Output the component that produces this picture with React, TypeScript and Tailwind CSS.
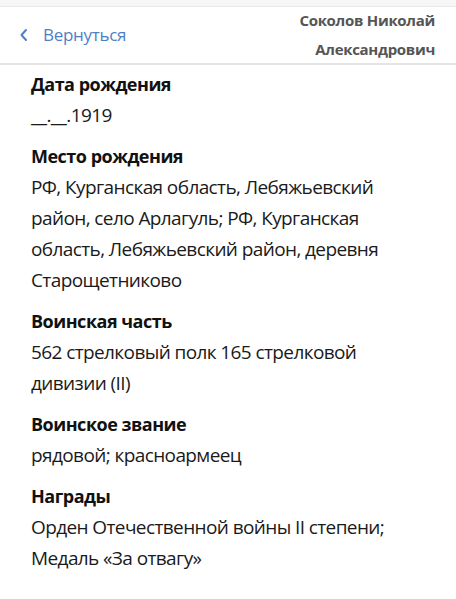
const sections = [
    { title: 'Дата рождения', lines: ['__.__.1919'] },
    {
        title: 'Место рождения',
        lines: [
            'РФ, Курганская область, Лебяжьевский',
            'район, село Арлагуль; РФ, Курганская',
            'область, Лебяжьевский район, деревня',
            'Старощетниково',
        ],
    },
    {
        title: 'Воинская часть',
        lines: ['562 стрелковый полк 165 стрелковой', 'дивизии (II)'],
    },
    { title: 'Воинское звание', lines: ['рядовой; красноармеец'] },
    {
        title: 'Награды',
        lines: ['Орден Отечественной войны II степени;', 'Медаль «За отвагу»'],
    },
];

const App = () => {
    return (
        <div className="w-[456px] h-[599px] bg-white font-['Open_Sans',sans-serif] overflow-hidden">
            {/* top strip */}
            <div className="h-[7px] bg-[#f6f6f6] border-b border-[#e9e9e9]" />
            {/* header */}
            <div className="flex items-center justify-between h-[58px] pl-[19px] pr-[21px] border-b-2 border-[#e4e4e4]">
                <div className="flex items-center gap-[15px] text-[#4f7fc4]">
                    <svg width="9" height="14" viewBox="0 0 9 14" fill="none">
                        <path
                            d="M7 2 L2.5 7 L7 12"
                            stroke="currentColor"
                            strokeWidth="2"
                            strokeLinecap="round"
                            strokeLinejoin="round"
                        />
                    </svg>
                    <span className="text-[17px] tracking-[-0.3px]">Вернуться</span>
                </div>
                <div className="flex flex-col items-end text-[#555] font-bold text-[15px] leading-[29px] tracking-[-0.3px]">
                    <span>Соколов Николай</span>
                    <span>Александрович</span>
                </div>
            </div>
            {/* content */}
            <div className="px-[31px] pt-[4px] text-[#1a1a1a] text-[19px] leading-[31px] tracking-[-0.6px]">
                {sections.map((section, index) => (
                    <div key={`${section.title}-${index}`} className={index === 0 ? '' : 'mt-[10px]'}>
                        <p className="font-bold text-[#111] text-[18px] tracking-[-0.5px]">{section.title}</p>
                        {section.lines.map((line, i) => (
                            <p key={i}>{line}</p>
                        ))}
                    </div>
                ))}
            </div>
        </div>
    );
};

export default App;
